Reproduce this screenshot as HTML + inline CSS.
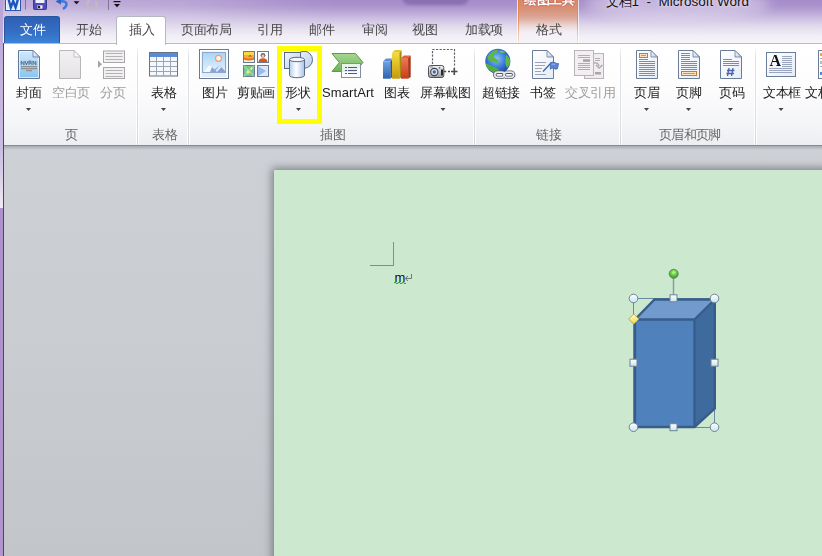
<!DOCTYPE html>
<html><head><meta charset="utf-8">
<style>
*{margin:0;padding:0;box-sizing:border-box}
html,body{width:822px;height:556px;overflow:hidden;background:linear-gradient(#cdd0d5 150px,#c9ccd1 350px,#c2c5ca 556px);font-family:"Liberation Sans",sans-serif;}
.a{position:absolute}
.t{position:absolute;font-size:12.5px;letter-spacing:-0.5px;line-height:14px;color:#1c1c1c;-webkit-font-smoothing:antialiased;white-space:nowrap;will-change:transform}
.g{color:#a29c98}
.arr{position:absolute;width:0;height:0;border-left:2.5px solid transparent;border-right:2.5px solid transparent;border-top:3px solid #4a4a4a}
.gl{color:#666}
.sep{position:absolute;top:45px;width:3px;height:100px;background:linear-gradient(90deg,rgba(255,255,255,.9) 0 1px,transparent 1px 2px,rgba(255,255,255,.9) 2px 3px)}
.sep::after{content:"";position:absolute;left:1px;top:0;width:1px;height:100px;background:linear-gradient(rgba(220,223,228,0),#dde0e5 12px,#d8dbe0 90px,#cfd3d8 100px)}
</style></head><body>
<!-- title / tabs background -->
<div class="a" style="left:0;top:0;width:822px;height:44px;background:linear-gradient(#a68bca 0px,#ab93cd 6px,#b9a6d6 12px,#cbbee1 18px,#dcd3ea 24px,#e8e3f0 30px,#f1eef6 36px,#f7f6fa 44px)"></div>
<div class="a" style="left:0;top:0;width:822px;height:30px;background:linear-gradient(90deg,rgba(255,255,255,.28) 0px,rgba(255,255,255,.22) 180px,rgba(255,255,255,.06) 290px,rgba(255,255,255,0) 340px);-webkit-mask-image:linear-gradient(#000 0px,#000 14px,transparent 30px)"></div>
<div class="a" style="left:402px;top:-12px;width:67px;height:17px;border-radius:8px;background:#8a70b0;filter:blur(1.5px)"></div>
<!-- left purple strip -->
<div class="a" style="left:0;top:0;width:3px;height:208px;background:linear-gradient(#b7a3d6 0px,#c1b0dc 60px,#cbbde2 150px,#dcd2ea 180px,#f0ebf6 207px)"></div>
<div class="a" style="left:0;top:208px;width:3px;height:348px;background:linear-gradient(#ae90cc,#b497cf 556px)"></div>
<div class="a" style="left:3px;top:43px;width:1px;height:513px;background:#4d4858"></div>
<!-- QAT -->
<svg class="a" style="left:0;top:0" width="125" height="14" viewBox="0 0 125 14">
 <rect x="5.5" y="-3" width="15" height="13.5" fill="#fff" stroke="#2c57a8"/>
 <rect x="6.5" y="-2" width="13" height="11.5" fill="#dfe9f8"/>
 <path d="M8.5 -1 L10.8 7.5 L13.2 1 L15.6 7.5 L18 -1" fill="none" stroke="#1a55c0" stroke-width="2.3"/>
 <rect x="25" y="0" width="1" height="9.5" fill="#807890"/>
 <path d="M33.5 -2 h13 v10.5 q0 1 -1 1 h-11 q-1 0 -1 -1z" fill="#4c4cba" stroke="#2a2a80" stroke-width=".8"/>
 <rect x="35.5" y="-2" width="9" height="5" fill="#eef0fa"/>
 <rect x="37.5" y="5.3" width="5" height="3.3" fill="#f4f4f4"/><rect x="38" y="5.8" width="2.2" height="2.3" fill="#222"/>
 <path d="M59 1.5 q7 -1 7.5 2.5 q0 3 -3.5 5" fill="none" stroke="#3a78e0" stroke-width="2.4"/>
 <path d="M55.5 1.5 L61 -2 L61 4.5 Z" fill="#2a66d0"/>
 <path d="M73.5 1.3 h6 l-3 3z" fill="#111"/>
 <path d="M95.5 1 A4.8 4.8 0 1 1 90 0" fill="none" stroke="#bdbbc0" stroke-width="2.4"/>
 <rect x="108" y="0" width="1" height="10" fill="#807890"/>
 <rect x="113.5" y="1" width="7" height="1.2" fill="#111"/>
 <path d="M114 4 h6 l-3 3.3z" fill="#111"/>
</svg>
<!-- title -->
<div class="a" style="left:585px;top:-14px;width:185px;height:36px;border-radius:50%;background:rgba(235,228,245,.45);filter:blur(6px)"></div>
<div class="a" style="left:606px;top:-6px;font-size:13.5px;line-height:15px;color:#111;white-space:pre;text-shadow:0 0 3px rgba(255,255,255,.6),0 0 6px rgba(255,255,255,.5)"><span style="font-size:12.5px;letter-spacing:-0.3px">文档</span>1  -  Microsoft Word</div>

<!-- context tab -->
<div class="a" style="left:517px;top:0;width:62px;height:43px;border-left:1px solid rgba(255,255,255,.7);border-right:1px solid rgba(255,255,255,.7)"></div>
<div class="a" style="left:518px;top:0;width:60px;height:43px;background:linear-gradient(#d98764 0px,#d8937a 10px,#dda99a 18px,#ecd8d8 26px,#f3eef4 32px,#f6f4f8 43px)"></div>
<div class="a" style="left:518px;top:0;width:1px;height:43px;background:linear-gradient(#e0843c,#e39058 20px,#efc4a8 34px,#f4e4dc 43px)"></div>
<div class="a" style="left:577px;top:0;width:1px;height:43px;background:linear-gradient(#e0843c,#e39058 20px,#efc4a8 34px,#f4e4dc 43px)"></div>
<div class="t" style="left:524px;top:-7px;color:#fff;font-weight:bold;text-shadow:0 0 2px #b55,0 0 1px #a44">绘图工具</div>

<!-- File tab -->
<div class="a" style="left:4px;top:16px;width:56px;height:27px;border-radius:3px 3px 0 0;background:linear-gradient(#2e5fb3,#3470c6 60%,#3d82d9);border:1px solid #2a56a0;border-bottom:none"></div>
<div class="t" style="left:20px;top:23px;color:#fff">文件</div>

<div class="t" style="left:76px;top:23px;color:#474747">开始</div>
<div class="t" style="left:181px;top:23px;color:#474747">页面布局</div>
<div class="t" style="left:257px;top:23px;color:#474747">引用</div>
<div class="t" style="left:309px;top:23px;color:#474747">邮件</div>
<div class="t" style="left:362px;top:23px;color:#474747">审阅</div>
<div class="t" style="left:412px;top:23px;color:#474747">视图</div>
<div class="t" style="left:465px;top:23px;color:#474747">加载项</div>
<div class="t" style="left:536px;top:23px;color:#474747">格式</div>

<!-- ribbon body -->
<div class="a" style="left:4px;top:43px;width:818px;height:102px;border-top:1px solid #b7bcc4;background:linear-gradient(#ffffff 0px,#fdfdfe 40px,#f4f5f7 80px,#eceef1 101px)"></div>
<div class="a" style="left:4px;top:145px;width:818px;height:1px;background:#868b94"></div>
<div class="a" style="left:4px;top:146px;width:818px;height:4px;background:linear-gradient(#a7abb2,#cdd0d5)"></div>

<!-- Insert tab -->
<div class="a" style="left:116px;top:16px;width:50px;height:29px;border-radius:3px 3px 0 0;background:#fff;border:1px solid #b4b9c1;border-bottom:none"></div>

<div class="t" style="left:129px;top:23px;color:#474747">插入</div>

<!-- icons -->
<svg class="a" style="left:0;top:0" width="822" height="150" viewBox="0 0 822 150">
<defs>
 <linearGradient id="gBlue" x1="0" y1="0" x2="0" y2="1"><stop offset="0" stop-color="#d3e9fb"/><stop offset="1" stop-color="#86c3f0"/></linearGradient>
 <linearGradient id="gPage" x1="0" y1="0" x2="1" y2="1"><stop offset="0" stop-color="#ffffff"/><stop offset="1" stop-color="#e6ecf6"/></linearGradient>
 <linearGradient id="gGrayPage" x1="0" y1="0" x2="0" y2="1"><stop offset="0" stop-color="#f3f0f3"/><stop offset="1" stop-color="#e6e2e6"/></linearGradient>
 <linearGradient id="gFold" x1="0" y1="0" x2="1" y2="1"><stop offset="0" stop-color="#ffffff"/><stop offset="1" stop-color="#b8c8e4"/></linearGradient>
 <linearGradient id="gSky" x1="0" y1="0" x2="0" y2="1"><stop offset="0" stop-color="#a9d4f6"/><stop offset="1" stop-color="#e4f3fd"/></linearGradient>
 <linearGradient id="gCyl" x1="0" y1="0" x2="1" y2="0"><stop offset="0" stop-color="#b5cdef"/><stop offset=".45" stop-color="#ffffff"/><stop offset="1" stop-color="#a9c3ea"/></linearGradient>
 <linearGradient id="gShape" x1="0" y1="0" x2="1" y2="1"><stop offset="0" stop-color="#eef4fd"/><stop offset="1" stop-color="#b8cff0"/></linearGradient>
 <linearGradient id="gGreen" x1="0" y1="0" x2="0" y2="1"><stop offset="0" stop-color="#a8d890"/><stop offset="1" stop-color="#6cb25a"/></linearGradient>
 <linearGradient id="gBarB" x1="0" y1="0" x2="0" y2="1"><stop offset="0" stop-color="#6ea4e0"/><stop offset="1" stop-color="#2c62b0"/></linearGradient>
 <linearGradient id="gBarY" x1="0" y1="0" x2="0" y2="1"><stop offset="0" stop-color="#f5dc3c"/><stop offset="1" stop-color="#c29a10"/></linearGradient>
 <linearGradient id="gBarR" x1="0" y1="0" x2="0" y2="1"><stop offset="0" stop-color="#f07850"/><stop offset="1" stop-color="#c83c1c"/></linearGradient>
 <radialGradient id="gGlobe" cx=".45" cy=".4" r=".6"><stop offset="0" stop-color="#8cc4f8"/><stop offset=".6" stop-color="#3878d8"/><stop offset="1" stop-color="#1c48a8"/></radialGradient>
 <linearGradient id="gCam" x1="0" y1="0" x2="0" y2="1"><stop offset="0" stop-color="#f4f4f4"/><stop offset="1" stop-color="#9a9ea4"/></linearGradient>
</defs>

<!-- 封面 -->
<path d="M18.5 50.5 H33 L39.5 57 V78.5 H18.5 Z" fill="url(#gBlue)" stroke="#63779a"/>
<path d="M19.5 51.5 H32.5 L38.5 57.5 V77.5 H19.5 Z" fill="none" stroke="#e8f4fe" stroke-width=".8"/>
<path d="M33 50.5 V57 H39.5 Z" fill="url(#gFold)" stroke="#63779a" stroke-width=".8"/>
<path d="M21.2 64.8 V61 L24 64.8 V61 M25 61 L26.5 64.8 L28 61 M29 64.8 V61 H30.8 Q31.8 62 30.8 63 H29 M30.8 63 L32 64.8 M33 64.8 V61 L35.8 64.8 V61" fill="none" stroke="#4a6282" stroke-width=".9"/>
<rect x="21" y="66.2" width="16" height="1" fill="#8b7e76"/>
<rect x="21" y="68.2" width="16" height="1" fill="#8b7e76"/>
<rect x="26" y="70.2" width="6" height="1" fill="#8b7e76"/>

<!-- 空白页 -->
<path d="M59.5 50.5 H74 L80.5 57 V78.5 H59.5 Z" fill="url(#gGrayPage)" stroke="#b9b5b9"/>
<path d="M74 50.5 V57 H80.5 Z" fill="#f8f6f8" stroke="#b9b5b9" stroke-width=".8"/>

<!-- 分页 -->
<path d="M98 60.5 L102 64.3 L98 68 Z" fill="#a4a4a4"/>
<rect x="103.5" y="51" width="21" height="11.5" fill="#f3f0f3" stroke="#a8a6a8"/>
<rect x="105.5" y="53" width="17" height="1" fill="#b4b2b4"/><rect x="105.5" y="56" width="17" height="1" fill="#b4b2b4"/><rect x="105.5" y="59" width="17" height="1" fill="#b4b2b4"/>
<rect x="103.5" y="67.5" width="21" height="11" fill="#f3f0f3" stroke="#a8a6a8"/>
<rect x="105.5" y="70" width="17" height="1" fill="#b4b2b4"/><rect x="105.5" y="73" width="17" height="1" fill="#b4b2b4"/><rect x="105.5" y="76" width="17" height="1" fill="#b4b2b4"/>

<!-- 表格 -->
<rect x="149.5" y="52.5" width="28" height="23.5" fill="#f4f8fd" stroke="#667286"/>
<rect x="150" y="53" width="27" height="4" fill="#5b8ad6"/>
<path d="M156.5 57 V76 M163.5 57 V76 M170.5 57 V76 M150 61.5 H177 M150 66.5 H177 M150 71.5 H177" stroke="#9ba5b5" stroke-width="1"/>

<!-- 图片 -->
<rect x="199.5" y="49.5" width="29" height="29" fill="#eef6fd" stroke="#6b7a90"/>
<rect x="200.5" y="50.5" width="27" height="27" fill="none" stroke="#ffffff"/>
<rect x="202.5" y="52.5" width="23" height="20" fill="url(#gSky)" stroke="#8ea8cc"/>
<circle cx="218.5" cy="58.3" r="3" fill="#fff8e0" stroke="#f49a78" stroke-width="1.2"/>
<path d="M203 72 L209.3 64.5 L214.5 69.5 L219.8 65.3 L225 71 V72 Z" fill="#8aa2d4"/>
<path d="M203 72 L209.3 64.5 L212 67 L210 72 Z" fill="#f4f8ff"/>
<path d="M215.5 70.5 L219.8 65.3 L221.5 67 L217 72 Z" fill="#dfe8fb"/>
<rect x="202" y="73" width="24" height="4" fill="#e0ecf8"/>
<!-- 剪贴画 -->
<rect x="243.5" y="51.5" width="11" height="11" fill="#fbe8d0" stroke="#6a7a94"/>
<path d="M244 52 H254 V59 Q249 61 244 59 Z" fill="#f6b030"/>
<path d="M244 52 H254 V55 H244Z" fill="#fbd648"/>
<path d="M244 57.5 Q249 59.5 254 57.5 V59.5 Q249 61.5 244 59.5Z" fill="#e8701c"/>
<path d="M248 56.5 l2 -1.5 l2 1.5z" fill="#a04818"/>
<rect x="257.5" y="51.5" width="11" height="11" fill="#fff" stroke="#6a7a94"/>
<circle cx="263" cy="55.3" r="2.4" fill="#6a6a6a"/><circle cx="263" cy="56" r="1.4" fill="#e8c8b0"/>
<path d="M258.5 62 q0 -3.8 4.5 -3.8 q4.5 0 4.5 3.8z" fill="#d8581a"/>
<rect x="243.5" y="65.5" width="11" height="11" fill="#74c494" stroke="#6a7a94"/>
<path d="M244 66 L254 76 M254 66 L244 76" stroke="#8cd4a4" stroke-width="2"/>
<path d="M248 69 l.8 2.2 l2.2 .8 l-2.2 .8 l-.8 2.2 l-.8 -2.2 l-2.2 -.8 l2.2 -.8z" fill="#f2ec78"/>
<path d="M251.5 66.5 l.6 1.4 l1.4 .6 l-1.4 .6 l-.6 1.4 l-.6 -1.4 l-1.4 -.6 l1.4 -.6z" fill="#f2ec78"/>
<rect x="257.5" y="65.5" width="11" height="11" fill="#dde9fb" stroke="#6a7a94"/>
<path d="M258 66 L266 71 L258 76Z" fill="#9ab8ee"/>
<!-- 形状 -->
<circle cx="304" cy="59.8" r="8.5" fill="url(#gShape)" stroke="#5a6a88"/>
<rect x="284.5" y="52.5" width="16" height="16" fill="url(#gShape)" stroke="#5a6a88"/>
<path d="M289.5 59.5 V75.5 A7.5 2.2 0 0 0 304.5 75.5 V59.5" fill="url(#gCyl)" stroke="#5a6a88"/>
<ellipse cx="297" cy="59.5" rx="7.5" ry="2.2" fill="#f4f8fe" stroke="#5a6a88"/>
<!-- SmartArt -->
<path d="M332 53.5 H355.5 L363 62.5 L355.5 71.5 H332 L339.3 62.5 Z" fill="url(#gGreen)" stroke="#5a9a48"/>
<rect x="341.5" y="63.5" width="19" height="14" fill="rgba(250,252,255,.85)" stroke="#7f8fa8"/>
<path d="M345 67.5 h2 M348 67.5 h9 M345 70.5 h2 M348 70.5 h9 M345 73.5 h2 M348 73.5 h9" stroke="#4a5a8a" stroke-width="1.1"/>

<!-- 图表 -->
<path d="M383 61.5 L386 58.5 H392.5 L390 61.5Z" fill="#5a90d8"/>
<rect x="383" y="61.5" width="7.3" height="17.2" fill="url(#gBarB)"/>
<path d="M390.3 61.5 L392.5 59 V77 L390.3 78.7Z" fill="#2a58a0"/>
<path d="M392 52.8 L395 50 H401.5 L399.4 52.8Z" fill="#e8c820"/>
<rect x="392" y="52.8" width="7.4" height="25.9" fill="url(#gBarY)"/>
<path d="M399.4 52.8 L401.6 50.2 V77 L399.4 78.7Z" fill="#a88a10"/>
<path d="M401 58 L404 55.4 H410.7 L408.1 58Z" fill="#e06040"/>
<rect x="401" y="58" width="7.1" height="20.7" fill="url(#gBarR)"/>
<path d="M408.1 58 L410.7 55.4 V77 L408.1 78.7Z" fill="#a83418"/>

<!-- 屏幕截图 -->
<path d="M432.5 64 V49.5 H454.5 V67.5" fill="none" stroke="#5c6068" stroke-width="1.2" stroke-dasharray="2.2 1.4"/>
<rect x="428.5" y="65.5" width="15.3" height="12" rx="2" fill="url(#gCam)" stroke="#4e5258"/>
<rect x="430" y="66.5" width="3" height="1" fill="#888"/>
<circle cx="434.3" cy="72" r="3.6" fill="#e4e6ea" stroke="#3e4248" stroke-width="1.1"/>
<circle cx="434.3" cy="72" r="1.7" fill="#2e6cc0"/>
<circle cx="439.5" cy="67.8" r=".9" fill="#3a70c0"/>
<rect x="441" y="69.5" width="2" height="6" fill="#2a2a2a"/>
<path d="M444 71.5 h2.2 M448 71.5 h2 M451 71.5 h6.5 M454.3 68 v7" stroke="#474b52" stroke-width="1.6"/>
<!-- 超链接 -->
<circle cx="497.8" cy="61.3" r="12.5" fill="url(#gGlobe)"/>
<path d="M487.3 57.5 Q489.5 51.5 496 50 Q499 50.5 498 52 Q494 53.5 493 56 Q494 58.5 497.5 59.5 Q499.5 61 498.5 62.5 Q494 63 490.5 61.5 Q488 60 487.3 57.5 Z" fill="#5cb845"/>
<path d="M499.5 50.5 Q503 50.6 505.5 52.3 Q502.5 53.3 500 52.3 Z" fill="#6ec850"/>
<path d="M485.6 63 Q490 65.5 495.5 67.5 Q500 69.5 502 73.2 Q498 74.5 494 73 Q489 70.5 486.5 67 Z" fill="#55ad40"/>
<path d="M506 55 Q509.5 56.8 510.3 61 Q510 65.5 507 68.2 Q505 64.5 505.3 60 Z" fill="#5cb845"/>
<g fill="none" stroke="#4e5664" stroke-width="3.4"><rect x="494.8" y="72.2" width="9.5" height="5.2" rx="2.6"/><rect x="504.2" y="72.2" width="9.5" height="5.2" rx="2.6"/></g>
<g fill="none" stroke="#e4e8ee" stroke-width="1.7"><rect x="494.8" y="72.2" width="9.5" height="5.2" rx="2.6"/><rect x="504.2" y="72.2" width="9.5" height="5.2" rx="2.6"/></g>
<!-- 书签 -->
<path d="M532.5 50.5 H547 L553.5 57 V78.5 H532.5 Z" fill="url(#gPage)" stroke="#6b7d99"/>
<path d="M547 50.5 V57 H553.5 Z" fill="url(#gFold)" stroke="#6b7d99" stroke-width=".8"/>
<path d="M535 62.5 h11 M535 65.5 h10 M535 68.5 h7 M535 71.5 h6 M535 74.5 h11" stroke="#9aa4b4" stroke-width="1"/>
<path d="M543 71.5 L551.5 62.5" stroke="#3a62b0" stroke-width="1.3"/>
<path d="M550.5 63 q2.5 -1.8 4.5 -.3 q2 1.4 3.5 .8 l-1 5.2 q-1.8 1 -3.6 -.3 q-2 -1.3 -3.6 .8z" fill="#5a86de" stroke="#3a5eac" stroke-width=".8"/>
<path d="M551.5 64.5 q2 -1 3.5 0" stroke="#a8c4f4" stroke-width=".8" fill="none"/>
<!-- 交叉引用 -->
<rect x="584.5" y="53.5" width="19" height="25" fill="#f0ecf0" stroke="#b8b4b8"/>
<path d="M595 58.5 h5 M595 60.5 h5" stroke="#b0aeb0" stroke-width="1"/>
<rect x="595" y="72" width="6" height="2.5" fill="#a8a6a8"/>
<path d="M594 63 q4 -1 5 3 M596 65 l3.2 3.2 l3.2 -3.2" fill="none" stroke="#a8a6a8" stroke-width="1.3"/>
<rect x="574.5" y="50.5" width="19" height="25" fill="#f2eef2" stroke="#b8b4b8"/>
<path d="M578 55.5 h12 M578 57.5 h12 M578 63.5 h12 M578 65.5 h12 M578 67.5 h12 M578 69.5 h12" stroke="#b0aeb0" stroke-width="1"/>
<rect x="583" y="59.3" width="7" height="2.5" fill="#a4a2a4"/>

<!-- 页眉 -->
<path d="M636.5 50.5 H651 L657.5 57 V78.5 H636.5 Z" fill="url(#gPage)" stroke="#6b7d99"/>
<path d="M651 50.5 V57 H657.5 Z" fill="url(#gFold)" stroke="#6b7d99" stroke-width=".8"/>
<rect x="639.5" y="53.5" width="8" height="4" fill="#fbe4c4" stroke="#d07a20"/>
<path d="M641 55.5 h5" stroke="#f08a30"/>
<path d="M639 59.5 h9 M639 61.5 h16 M639 63.5 h16 M639 65.5 h16 M639 67.5 h16 M639 69.5 h16 M639 71.5 h16 M639 73.5 h16 M639 75.5 h16" stroke="#7888c0" stroke-width="1"/>

<!-- 页脚 -->
<path d="M678.5 50.5 H693 L699.5 57 V78.5 H678.5 Z" fill="url(#gPage)" stroke="#6b7d99"/>
<path d="M693 50.5 V57 H699.5 Z" fill="url(#gFold)" stroke="#6b7d99" stroke-width=".8"/>
<path d="M681 53.5 h9 M681 55.5 h9 M681 57.5 h9 M681 59.5 h9 M681 61.5 h16 M681 63.5 h16 M681 65.5 h16 M681 67.5 h16 M681 69.5 h16" stroke="#7888c0" stroke-width="1"/>
<rect x="681.5" y="71.5" width="15" height="4" fill="#fbe4c4" stroke="#d07a20"/>
<path d="M683 73.5 h12" stroke="#f08a30"/>

<!-- 页码 -->
<path d="M720.5 50.5 H735 L741.5 57 V78.5 H720.5 Z" fill="url(#gPage)" stroke="#6b7d99"/>
<path d="M735 50.5 V57 H741.5 Z" fill="url(#gFold)" stroke="#6b7d99" stroke-width=".8"/>
<path d="M723 59.5 h9 M723 61.5 h16 M723 63.5 h16 M723 65.5 h16" stroke="#7888c0" stroke-width="1"/>
<path d="M729 68 l-1.5 8 M733 68 l-1.5 8 M727 70.5 h7.5 M726.5 73.5 h7.5" stroke="#4a62a8" stroke-width="1.3"/>

<!-- 文本框 -->
<rect x="766.5" y="52.5" width="29" height="24" fill="url(#gPage)" stroke="#6b7d99"/>

<path d="M782 56.5 h10 M782 58.5 h10 M782 60.5 h10 M782 62.5 h10 M782 64.5 h10 M782 66.5 h10 M769 68.5 h23 M769 70.5 h23 M769 72.5 h23" stroke="#9aa6be" stroke-width="1"/>

<!-- 文档部件 partial -->
<rect x="818.5" y="50.5" width="10" height="28" fill="#fff" stroke="#6b7d99"/>
<rect x="820" y="53" width="3" height="3" fill="#f8a830"/>
<rect x="820" y="58" width="3" height="1" fill="#9aa6be"/><rect x="820" y="61" width="3" height="3" fill="#b0bcd0"/><rect x="820" y="66" width="3" height="1" fill="#9aa6be"/>
<rect x="820" y="72" width="3" height="3" fill="#4a8ae0"/>

<!-- arrows --><path d="M26.0 108 h5 l-2.5 3z" fill="#454545"/><path d="M161.0 108 h5 l-2.5 3z" fill="#454545"/><path d="M296.0 108 h5 l-2.5 3z" fill="#454545"/><path d="M440.5 108 h5 l-2.5 3z" fill="#454545"/><path d="M644.0 108 h5 l-2.5 3z" fill="#454545"/><path d="M686.0 108 h5 l-2.5 3z" fill="#454545"/><path d="M728.0 108 h5 l-2.5 3z" fill="#454545"/><path d="M778.5 108 h5 l-2.5 3z" fill="#454545"/>
<!-- yellow highlight -->
<rect x="279.5" y="48.5" width="40" height="73" fill="none" stroke="#ffff00" stroke-width="5"/>
</svg>

<div class="a" style="left:769.5px;top:53px;font-family:'Liberation Serif',serif;font-size:16px;line-height:16px;color:#111;font-weight:bold">A</div>
<!-- ribbon labels -->
<div class="t" style="left:16px;top:86px">封面</div>
<div class="t g" style="left:51.5px;top:86px">空白页</div>
<div class="t g" style="left:99.5px;top:86px">分页</div>
<div class="t" style="left:151px;top:86px">表格</div>
<div class="t" style="left:202px;top:86px">图片</div>
<div class="t" style="left:237px;top:86px">剪贴画</div>
<div class="t" style="left:285px;top:86px">形状</div>
<div class="t" style="left:384px;top:86px">图表</div>
<div class="t" style="left:419.5px;top:86px">屏幕截图</div>
<div class="t" style="left:482px;top:86px">超链接</div>
<div class="t" style="left:530px;top:86px">书签</div>
<div class="t g" style="left:565px;top:86px">交叉引用</div>
<div class="t" style="left:634px;top:86px">页眉</div>
<div class="t" style="left:676px;top:86px">页脚</div>
<div class="t" style="left:718.5px;top:86px">页码</div>
<div class="t" style="left:763px;top:86px">文本框</div>
<div class="t" style="left:805px;top:86px">文档</div>
<div class="t" style="left:322px;top:85.5px;font-size:13px;letter-spacing:0.1px">SmartArt</div>
<div class="t gl" style="left:64.5px;top:128px">页</div>
<div class="t gl" style="left:152px;top:128px">表格</div>
<div class="t gl" style="left:319.5px;top:128px">插图</div>
<div class="t gl" style="left:536px;top:128px">链接</div>
<div class="t gl" style="left:658.5px;top:128px;letter-spacing:-0.75px">页眉和页脚</div>
<div class="sep" style="left:136px"></div>
<div class="sep" style="left:187px"></div>
<div class="sep" style="left:473px"></div>
<div class="sep" style="left:619px"></div>
<div class="sep" style="left:754px"></div>

<!-- page -->
<div class="a" style="left:274px;top:170px;width:560px;height:400px;background:#cce8cf;box-shadow:0 0 8px 2px rgba(60,64,72,.55)"></div>


<!-- page marks -->
<div class="a" style="left:370px;top:265px;width:24px;height:1px;background:#8a8a8a"></div>
<div class="a" style="left:393px;top:242px;width:1px;height:24px;background:#8a8a8a"></div>
<div class="a" style="left:394.5px;top:270px;font-family:'Liberation Sans',sans-serif;font-size:13px;line-height:15px;color:#111">m</div>
<svg class="a" style="left:394px;top:272px" width="20" height="14" viewBox="394 272 20 14">
 <path d="M411.5 274 V278.5 H405.5 M408 276 L405.2 278.5 L408 281" fill="none" stroke="#777" stroke-width="1"/>
 <path d="M394 283 q1 -1.5 2 0 q1 1.5 2 0 q1 -1.5 2 0 q1 1.5 2 0 q1 -1.5 2 0 q1 1.5 2 0" fill="none" stroke="#2a9a2a" stroke-width="1"/>
</svg>
<!-- cube -->
<svg class="a" style="left:620px;top:260px" width="110" height="180" viewBox="620 260 110 180">
 <defs>
  <linearGradient id="hG" x1="0" y1="0" x2="0" y2="1"><stop offset="0" stop-color="#ffffff"/><stop offset="1" stop-color="#c8e4f0"/></linearGradient>
  <radialGradient id="gG" cx=".5" cy=".35" r=".6"><stop offset="0" stop-color="#c8f8a8"/><stop offset=".5" stop-color="#6ad040"/><stop offset="1" stop-color="#3a9a28"/></radialGradient>
  <linearGradient id="yG" x1="0" y1="0" x2="0" y2="1"><stop offset="0" stop-color="#fffce0"/><stop offset="1" stop-color="#f2d630"/></linearGradient>
 </defs>
 <path d="M633.5 298.5 H714.5 V427.5 H633.5 Z" fill="none" stroke="#6a8aa4" stroke-width="1"/>
 <path d="M673.5 278 V296" stroke="#7f9aac" stroke-width="1.4"/>
 <path d="M635 319.5 L654.5 299.5 H714.8 V408.5 L694.5 427 H635 Z" fill="#4f81bd"/>
 <path d="M635 319.5 L654.5 299.5 H714.8 L694.5 319.5 Z" fill="#729acc"/>
 <path d="M694.5 319.5 L714.8 299.5 V408.5 L694.5 427 Z" fill="#3f6a9e"/>
 <path d="M635 319.5 L654.5 299.5 H714.8 V408.5 L694.5 427 H635 Z M635 319.5 H694.5 L714.8 299.5 M694.5 319.5 V427" fill="none" stroke="#385d8a" stroke-width="2.4" stroke-linejoin="miter"/>
 <circle cx="673.7" cy="273.8" r="4.5" fill="url(#gG)" stroke="#5f7f60" stroke-width=".9"/>
 <g fill="url(#hG)" stroke="#6f8294" stroke-width="1">
  <circle cx="633.5" cy="298.5" r="4.3"/><circle cx="714.5" cy="298.5" r="4.3"/>
  <circle cx="633.5" cy="427.2" r="4.3"/><circle cx="714.5" cy="427.2" r="4.3"/>
  <rect x="670" y="294.8" width="7" height="7"/><rect x="670" y="423.7" width="7" height="7"/>
  <rect x="630" y="359.2" width="7" height="7"/><rect x="711" y="359.2" width="7" height="7"/>
 </g>
 <path d="M633.8 314 L638.9 319.1 L633.8 324.2 L628.7 319.1 Z" fill="url(#yG)" stroke="#b0983a" stroke-width=".8"/>
</svg>
</body></html>
